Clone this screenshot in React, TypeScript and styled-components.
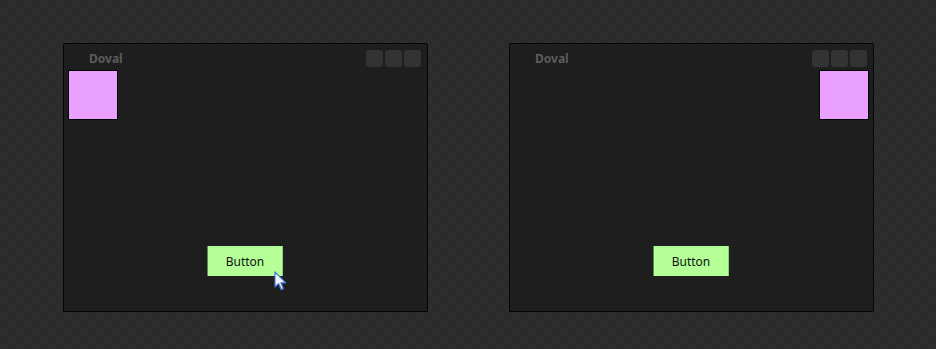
import styled, { createGlobalStyle } from "styled-components";

const GlobalStyle = createGlobalStyle`
  html, body {
    margin: 0;
    padding: 0;
  }

  body {
    width: 936px;
    height: 349px;
    overflow: hidden;
    background-color: #2b2b2b;
    background-image:
      linear-gradient(45deg, #2e2e2e 25%, transparent 25%, transparent 75%, #2e2e2e 75%),
      linear-gradient(45deg, #2e2e2e 25%, transparent 25%, transparent 75%, #2e2e2e 75%);
    background-size: 16px 16px;
    background-position: 0 0, 8px 8px;
    font-family: "Noto Sans", "Open Sans", sans-serif;
  }
`;

type Side = "left" | "right";

function Cursor() {
  return (
    <CursorSvg width="14" height="21" viewBox="0 0 14 21">
      <defs>
        <linearGradient id="cur" x1="0" y1="0" x2="1" y2="1">
          <stop offset="0" stopColor="#ffffff" />
          <stop offset="1" stopColor="#dbe6fb" />
        </linearGradient>
      </defs>
      <path
        d="M1 1 L1 16 L4.6 12.6 L7.2 18.6 L9.4 17.6 L6.9 11.8 L11.8 11.8 Z"
        fill="url(#cur)"
        stroke="#4a78d8"
        strokeWidth="1.2"
        strokeLinejoin="round"
      />
    </CursorSvg>
  );
}

function DemoWindow({ side, hover }: { side: Side; hover?: boolean }) {
  return (
    <Window>
      <TitleBar>
        <Title>Doval</Title>
        <Controls>
          <Control />
          <Control />
          <Control />
        </Controls>
      </TitleBar>
      <Body>
        <Square $side={side} />
        <ButtonWrap>
          <Button>Button</Button>
          {hover && <Cursor />}
        </ButtonWrap>
      </Body>
    </Window>
  );
}

export default function App() {
  return (
    <>
      <GlobalStyle />
      <Stage>
        <DemoWindow side="left" hover />
        <DemoWindow side="right" />
      </Stage>
    </>
  );
}

const Stage = styled.div`
  display: flex;
  gap: 81px;
  padding: 43px 0 0 63px;
`;

const Window = styled.div`
  box-sizing: border-box;
  width: 365px;
  height: 269px;
  display: flex;
  flex-direction: column;
  background: #1e1e1e;
  border: 1px solid #050505;
  border-radius: 2px 2px 0 0;
`;

const TitleBar = styled.div`
  height: 26px;
  display: flex;
  align-items: flex-start;
  justify-content: space-between;
  padding: 0 6px 0 25px;
`;

const Title = styled.span`
  margin-top: 8px;
  font-size: 12px;
  line-height: 14px;
  font-weight: 700;
  color: #5c5c5c;
`;

const Controls = styled.div`
  display: flex;
  gap: 2px;
  margin-top: 6px;
`;

const Control = styled.div`
  width: 17px;
  height: 17px;
  border-radius: 3px;
  background: #333333;
`;

const Body = styled.div`
  flex: 1;
  display: flex;
  flex-direction: column;
  padding: 0 4px 35px;
`;

const Square = styled.div<{ $side: Side }>`
  width: 48px;
  height: 48px;
  background: #eaa0ff;
  border: 1px solid #000;
  align-self: ${(p) => (p.$side === "left" ? "flex-start" : "flex-end")};
`;

const ButtonWrap = styled.div`
  position: relative;
  margin-top: auto;
  margin-right: 1px;
  align-self: center;
`;

const Button = styled.button`
  box-sizing: border-box;
  width: 76px;
  height: 30px;
  padding: 0;
  display: block;
  background: #b4ff96;
  border: none;
  border-left: 1px solid #5f8a4e;
  border-right: 1px solid #8fcf76;
  color: #101010;
  font-family: "Noto Sans", "Open Sans", sans-serif;
  font-size: 12px;
`;

const CursorSvg = styled.svg`
  position: absolute;
  left: 67px;
  top: 25px;
  pointer-events: none;
`;
